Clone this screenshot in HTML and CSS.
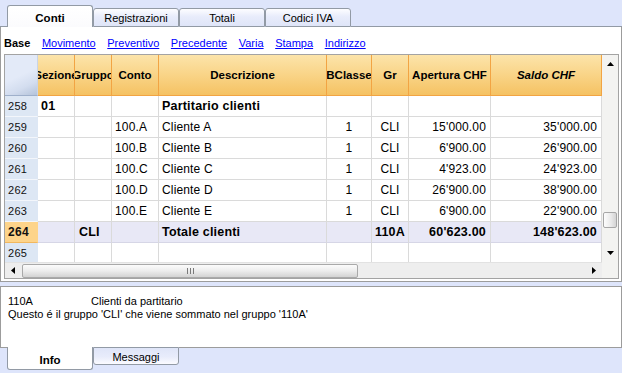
FILE: index.html
```html
<!DOCTYPE html>
<html>
<head>
<meta charset="utf-8">
<link rel="stylesheet" href="styles.css">
</head>
<body>
<div class="tabbar top">
  <div class="sp"></div>
  <div class="tab active">Conti</div>
  <div class="tab">Registrazioni</div>
  <div class="tab">Totali</div>
  <div class="tab">Codici IVA</div>
  <div class="fill"></div>
</div>
<div class="panel">
  <div class="links">
    <b>Base</b>
    <a>Movimento</a>
    <a>Preventivo</a>
    <a>Precedente</a>
    <a>Varia</a>
    <a>Stampa</a>
    <a>Indirizzo</a>
  </div>
  <div class="grid">
    <div class="gtop">
      <div class="table">
        <div class="row head">
          <div class="c corner"></div>
          <div class="c">Sezione</div>
          <div class="c">Gruppo</div>
          <div class="c">Conto</div>
          <div class="c">Descrizione</div>
          <div class="c">BClasse</div>
          <div class="c">Gr</div>
          <div class="c">Apertura CHF</div>
          <div class="c it">Saldo CHF</div>
        </div>
        <div class="row">
          <div class="c rn">258</div>
          <div class="c b">01</div>
          <div class="c"></div>
          <div class="c"></div>
          <div class="c b">Partitario clienti</div>
          <div class="c"></div>
          <div class="c"></div>
          <div class="c"></div>
          <div class="c"></div>
        </div>
        <div class="row">
          <div class="c rn">259</div>
          <div class="c"></div>
          <div class="c"></div>
          <div class="c">100.A</div>
          <div class="c">Cliente A</div>
          <div class="c ctr">1</div>
          <div class="c ctr">CLI</div>
          <div class="c num">15'000.00</div>
          <div class="c num">35'000.00</div>
        </div>
        <div class="row">
          <div class="c rn">260</div>
          <div class="c"></div>
          <div class="c"></div>
          <div class="c">100.B</div>
          <div class="c">Cliente B</div>
          <div class="c ctr">1</div>
          <div class="c ctr">CLI</div>
          <div class="c num">6'900.00</div>
          <div class="c num">26'900.00</div>
        </div>
        <div class="row">
          <div class="c rn">261</div>
          <div class="c"></div>
          <div class="c"></div>
          <div class="c">100.C</div>
          <div class="c">Cliente C</div>
          <div class="c ctr">1</div>
          <div class="c ctr">CLI</div>
          <div class="c num">4'923.00</div>
          <div class="c num">24'923.00</div>
        </div>
        <div class="row">
          <div class="c rn">262</div>
          <div class="c"></div>
          <div class="c"></div>
          <div class="c">100.D</div>
          <div class="c">Cliente D</div>
          <div class="c ctr">1</div>
          <div class="c ctr">CLI</div>
          <div class="c num">26'900.00</div>
          <div class="c num">38'900.00</div>
        </div>
        <div class="row">
          <div class="c rn">263</div>
          <div class="c"></div>
          <div class="c"></div>
          <div class="c">100.E</div>
          <div class="c">Cliente E</div>
          <div class="c ctr">1</div>
          <div class="c ctr">CLI</div>
          <div class="c num">6'900.00</div>
          <div class="c num">22'900.00</div>
        </div>
        <div class="row sel">
          <div class="c rn">264</div>
          <div class="c"></div>
          <div class="c b grp">CLI</div>
          <div class="c"></div>
          <div class="c b">Totale clienti</div>
          <div class="c"></div>
          <div class="c ctr b">110A</div>
          <div class="c num b">60'623.00</div>
          <div class="c num b">148'623.00</div>
        </div>
        <div class="row">
          <div class="c rn">265</div>
          <div class="c"></div>
          <div class="c"></div>
          <div class="c"></div>
          <div class="c"></div>
          <div class="c"></div>
          <div class="c"></div>
          <div class="c"></div>
          <div class="c"></div>
        </div>
      </div>
      <div class="vs">
        <div class="btn"><svg width="7" height="4" viewBox="0 0 7 4"><polygon points="0,4 3.5,0 7,4" fill="#000"/></svg></div>
        <div class="vthumb"></div>
        <div class="grow"></div>
        <div class="btn"><svg width="7" height="4" viewBox="0 0 7 4"><polygon points="0,0 7,0 3.5,4" fill="#000"/></svg></div>
      </div>
    </div>
    <div class="gbot">
      <div class="hs">
        <div class="hbtn"><svg width="4" height="7" viewBox="0 0 4 7"><polygon points="4,0 4,7 0,3.5" fill="#000"/></svg></div>
        <div class="hthumb"><svg width="7" height="6" viewBox="0 0 7 6"><path d="M0.5 0v6M3.5 0v6M6.5 0v6" stroke="#7a7a7a" stroke-width="1"/></svg></div>
        <div class="grow"></div>
        <div class="hbtn"><svg width="4" height="7" viewBox="0 0 4 7"><polygon points="0,0 4,3.5 0,7" fill="#000"/></svg></div>
      </div>
      <div class="scorner"></div>
    </div>
  </div>
</div>
<div class="info">
  <div><span class="k">110A</span>Clienti da partitario</div>
  <div>Questo é il gruppo 'CLI' che viene sommato nel gruppo '110A'</div>
</div>
<div class="tabbar bottom">
  <div class="sp"></div>
  <div class="tab active">Info</div>
  <div class="tab">Messaggi</div>
  <div class="fill"></div>
</div>
</body>
</html>
```
FILE: styles.css
```css
* { box-sizing: border-box; }

body {
  margin: 0;
  width: 622px;
  height: 373px;
  overflow: hidden;
  background: #dee5fb;
  font-family: "Liberation Sans", Arial, sans-serif;
  font-size: 11px;
  color: #000;
}

/* tab bars */
.tabbar { display: flex; }
.tabbar .sp { width: 7px; }
.tabbar .fill { flex: 1; }

.tabbar.top { height: 27px; align-items: flex-end; }
.tabbar.top .sp, .tabbar.top .fill { height: 1px; border-bottom: 1px solid #929aa5; }

.tab {
  width: 86px;
  display: flex;
  align-items: center;
  justify-content: center;
  border: 1px solid #929aa5;
  white-space: nowrap;
}
.top .tab {
  height: 19px;
  border-radius: 3px 3px 0 0;
  background: linear-gradient(#fdfdff, #e8ecfb 45%, #dfe5f8);
}
.top .tab.active {
  height: 22px;
  border-bottom: none;
  background: linear-gradient(#ffffff, #fbfbfd);
  font-weight: bold;
  font-size: 11.5px;
  padding-top: 2px;
}

.tabbar.bottom { height: 26px; align-items: flex-start; }
.tabbar.bottom .sp, .tabbar.bottom .fill { height: 1px; border-top: 1px solid #9c9c9c; }
.bottom .tab {
  height: 18px;
  border-radius: 0 0 3px 3px;
  background: linear-gradient(#dfe5f8, #e8ecfb 55%, #fbfbff);
  padding-top: 1px;
}
.bottom .tab.active {
  height: 23px;
  border-top: none;
  background: #fff;
  font-weight: bold;
  font-size: 11.5px;
  padding-top: 3px;
}

/* main panel */
.panel {
  background: #fff;
  border: 1px solid #9c9c9c;
  border-top: none;
  padding: 0 2px 2px 3px;
}

.links {
  height: 27px;
  display: flex;
  align-items: center;
  gap: 11.6px;
  padding-top: 5px;
}
.links a {
  color: #0000ff;
  text-decoration: underline;
}

.grid { border: 1px solid #a3a3a3; }
.gtop { display: flex; height: 207px; }

.table {
  width: 597px;
  display: grid;
  grid-template-columns: 33px 37px 37px 47px 168px 45px 37px 82px 111px;
  grid-template-rows: 41px;
  grid-auto-rows: 21px;
  overflow: hidden;
  font-size: 12px;
  letter-spacing: 0.15px;
}
.row { display: contents; }

.c {
  display: flex;
  align-items: center;
  padding: 0 3px;
  white-space: nowrap;
  overflow: hidden;
  border-right: 1px solid #dadada;
  border-bottom: 1px solid #dadada;
}
.c.b { font-weight: bold; font-size: 12.5px; letter-spacing: 0.2px; }
.c.grp { padding-left: 4px; }
.c.ctr { justify-content: center; }
.c.num { justify-content: flex-end; padding-right: 4px; }

.head .c {
  justify-content: center;
  padding: 0;
  font-weight: bold;
  font-size: 11.5px;
  letter-spacing: 0;
  background: linear-gradient(#fce4aa, #f9d487 50%, #f5c263);
  border-right-color: #f2a443;
  border-bottom-color: #f2a443;
}
.head .c.it { font-style: italic; }
.head .c.corner {
  background: linear-gradient(155deg, #e3eaf8 50%, #d3ddef 75%, #b4c3da);
  border-right-color: #c9d4e6;
  border-bottom-color: #9fb0cb;
}

.c.rn {
  background: #dde7f4;
  border-right-color: #dde7f4;
  border-bottom-color: #f3f6fb;
  font-size: 11px;
  letter-spacing: 0.3px;
  color: #111;
}

.sel .c { background: #e8e8f6; border-bottom-color: #d6d6e6; }
.sel .c.rn {
  background: #fdd48a;
  border-right-color: #fdd48a;
  border-bottom-color: #f2b85f;
  font-weight: bold;
  font-size: 12px;
}

/* scroll bars */
.vs {
  width: 16px;
  background: #f3f3f1;
  display: flex;
  flex-direction: column;
  align-items: center;
}
.vs .btn {
  height: 18px;
  width: 16px;
  display: flex;
  align-items: center;
  justify-content: center;
}
.vthumb {
  margin-top: 139px;
  width: 14px;
  height: 16px;
  border: 1px solid #a7a7a7;
  border-radius: 2px;
  background: linear-gradient(90deg, #fdfdfd, #e9e9e9 60%, #d4d4d4);
}
.grow { flex: 1; }

.gbot { display: flex; height: 16px; }
.hs {
  width: 597px;
  display: flex;
  align-items: center;
  background: #eeeeee;
  border-top: 1px solid #e2e2e2;
}
.hbtn {
  width: 16px;
  height: 15px;
  display: flex;
  align-items: center;
  justify-content: center;
}
.hthumb {
  margin-left: 1px;
  width: 336px;
  height: 14px;
  border: 1px solid #a9a9a9;
  border-radius: 2px;
  background: linear-gradient(#fbfbfb, #ececec 50%, #d3d3d3);
  display: flex;
  align-items: center;
  justify-content: center;
}
.scorner { width: 16px; background: #f3f3f1; }

/* info panel */
.info {
  margin-top: 4px;
  height: 61px;
  background: #fff;
  border: 1px solid #9c9c9c;
  border-bottom: none;
  padding: 8px 0 0 7px;
  line-height: 13px;
  font-size: 11px;
}
.info .k { display: inline-block; width: 83px; }
```
